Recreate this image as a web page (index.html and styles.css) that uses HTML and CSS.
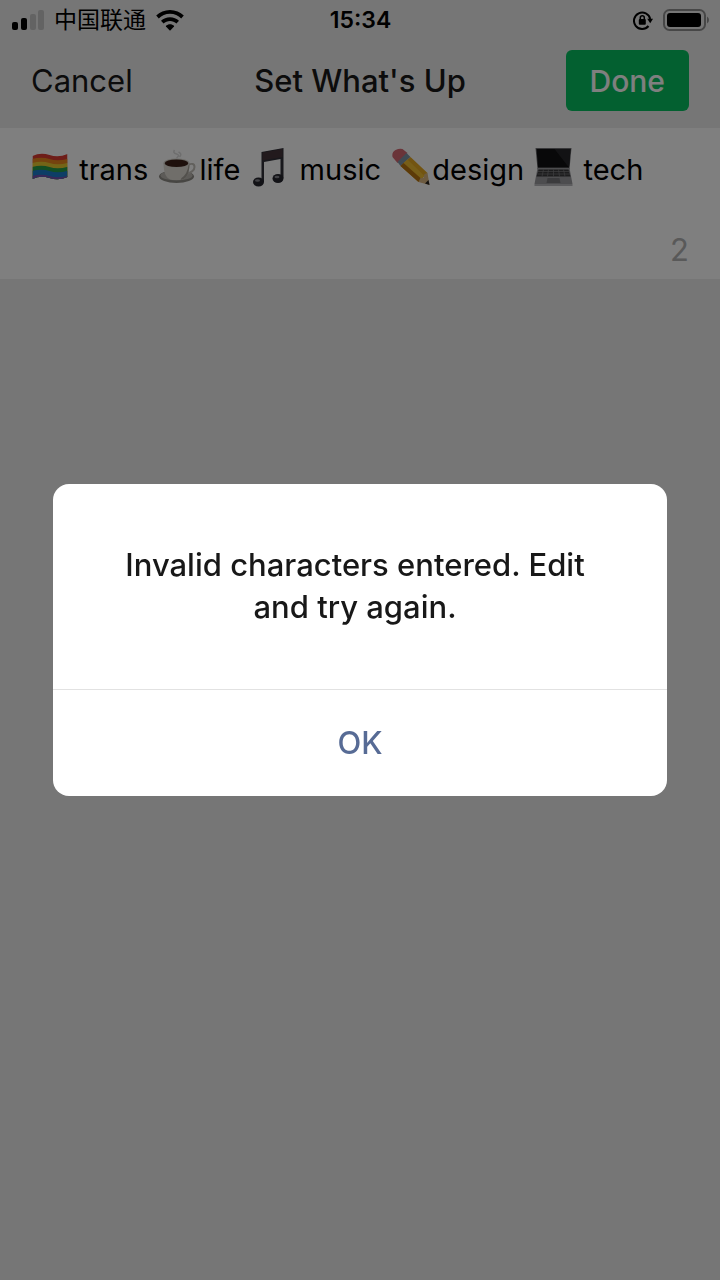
FILE: index.html
```
<!DOCTYPE html>
<html lang="en">
<head>
<meta charset="utf-8">
<meta name="viewport" content="width=device-width, initial-scale=1">
<title>Set What's Up</title>
<link rel="stylesheet" href="styles.css">
</head>
<body>
<div class="screen">
  <header class="top">
    <div class="status">
      <div class="status-left">
        <svg class="signal" viewBox="0 0 32 20" aria-hidden="true">
          <rect x="0" y="12" width="6" height="8" rx="2"/>
          <rect x="9" y="8" width="6" height="12" rx="2"/>
          <rect class="weak" x="18" y="4" width="6" height="16" rx="2"/>
          <rect class="weak" x="26" y="0" width="6" height="20" rx="2"/>
        </svg>
        <span class="carrier">中国联通</span>
        <svg class="wifi" viewBox="0 0 28 21" aria-hidden="true">
          <path d="M14 0C8.600 0 3.700 2.100 0.200 5.600L2.800 8.400C5.700 5.500 9.600 3.800 14 3.800S22.300 5.500 25.200 8.400L27.800 5.600C24.300 2.100 19.400 0 14 0Z"/>
          <path d="M14 7.200C10.600 7.200 7.400 8.500 5 10.800L7.600 13.500C9.300 11.900 11.500 11 14 11S18.700 11.900 20.400 13.500L23 10.800C20.600 8.500 17.400 7.200 14 7.200Z"/>
          <path d="M14 14.200C12.500 14.200 11 14.800 10 15.800Q9.800 16.100 10 16.400L13.500 20.200Q14 20.700 14.500 20.200L18 16.400Q18.200 16.100 18 15.800C17 14.800 15.500 14.200 14 14.200Z"/>
        </svg>
      </div>
      <time class="clock">15:34</time>
      <div class="status-right">
        <svg class="lock" viewBox="0 0 20 19" aria-hidden="true">
          <path class="ring" d="M15.500 15A8.200 8.200 0 1 1 17.200 8"/>
          <path d="M14.200 7.800H20L17.200 12.200Z"/>
          <rect x="5.800" y="8" width="7" height="5.800" rx="1"/>
          <path class="shackle" d="M7.300 8.500V6.700a2 2 0 0 1 4 0V8.500"/>
        </svg>
        <svg class="battery" viewBox="0 0 46 22" aria-hidden="true">
          <rect class="case" x="1" y="1" width="41" height="20" rx="5.500"/>
          <rect x="4" y="4" width="34" height="14" rx="3"/>
          <path class="cap" d="M44 7.500Q46 8.500 46 11T44 14.500Z"/>
        </svg>
      </div>
    </div>
    <nav class="nav">
      <div class="nav-side"><button class="cancel" type="button">Cancel</button></div>
      <h1 class="title">Set What's Up</h1>
      <div class="nav-side end"><button class="done" type="button">Done</button></div>
    </nav>
  </header>
  <main class="field">
    <div class="entry" role="textbox" contenteditable="true" spellcheck="false" aria-label="What's Up"><svg class="emoji" viewBox="0 0 42 42" role="img" aria-label="Rainbow flag">
      <defs><clipPath id="flag"><path d="M4 9Q12 5 21 8T39 7V30Q30 34 21 31T4 32Z"/></clipPath></defs>
      <g clip-path="url(#flag)">
        <path fill="#dd3a30" d="M0 4H42V16H0Z"/>
        <path fill="#e8871e" d="M0 13Q12 9 21 12T42 11V42H0Z"/>
        <path fill="#e6c82e" d="M0 17Q12 13 21 16T42 15V42H0Z"/>
        <path fill="#249c49" d="M0 21Q12 17 21 20T42 19V42H0Z"/>
        <path fill="#1a7ccc" d="M0 25Q12 21 21 24T42 23V42H0Z"/>
        <path fill="#7350b0" d="M0 30Q12 26 21 29T42 28V42H0Z"/>
      </g>
    </svg> trans <svg class="emoji" viewBox="0 0 42 42" role="img" aria-label="Coffee">
      <ellipse cx="20" cy="29.500" rx="17.500" ry="6.500" fill="#8f8c86"/>
      <ellipse cx="20" cy="28.500" rx="16" ry="5" fill="#bab7b0"/>
      <path d="M31 18Q38 15 38 20T29 27" fill="none" stroke="#c4c1ba" stroke-width="2"/>
      <path d="M7 16Q7 32 16 33H24Q33 32 33 16Z" fill="#e0ddd5"/>
      <path d="M25 31Q31 27 32 18L33 16Q33 32 24 33Z" fill="#a7a39a"/>
      <ellipse cx="20" cy="16" rx="13" ry="4.500" fill="#d8d5ce"/>
      <ellipse cx="20" cy="16.300" rx="11.800" ry="3.800" fill="#3c2118"/>
      <path d="M20 11Q24 8 20 7T18 3M23 10Q26 7 22 5" fill="none" stroke="#c5c5c5" stroke-width="1.500" opacity=".6"/>
    </svg>life <svg class="emoji" viewBox="0 0 42 42" role="img" aria-label="Musical notes">
      <path d="M13 5L35 1V31H32V12L15.500 15V35H13Z" fill="#303038"/>
      <path d="M14 5.500L34 2V10L14 13.500Z" fill="#44343a"/>
      <ellipse cx="10" cy="35" rx="5.500" ry="4.500" fill="#24242c"/>
      <ellipse cx="29.500" cy="31.500" rx="5.500" ry="4.500" fill="#24242c"/>
      <ellipse cx="9" cy="33.500" rx="2.500" ry="1.300" fill="#85858d"/>
      <ellipse cx="28.500" cy="30" rx="2.500" ry="1.300" fill="#85858d"/>
    </svg> music <svg class="emoji" viewBox="0 0 42 42" role="img" aria-label="Pencil">
      <path d="M3 10Q2 5 6 3T13 2L18 6L8 16Z" fill="#d56873"/>
      <path d="M8 15L17 6L21 10L11 19Z" fill="#7e94a6"/>
      <path d="M11 19L21 10L38 26L29 35Z" fill="#e5a822"/>
      <path d="M14 16L18 12.500L35 29L32 32Z" fill="#eebc30"/>
      <path d="M11 19L14 16L32 32L29 35Z" fill="#b87410"/>
      <path d="M29 35L31 31L34 31L35 27L38 26L40 38Z" fill="#dab681"/>
      <path d="M35.500 36.500L39 33L40 38Z" fill="#292522"/>
    </svg>design <svg class="emoji" viewBox="0 0 42 42" role="img" aria-label="Laptop">
      <path d="M3 1H39L37 22H5Z" fill="#707074"/>
      <path d="M4 2H38L36.500 20.500H5.500Z" fill="#101012"/>
      <path d="M22 2H38L36.500 20.500Z" fill="#252528"/>
      <path d="M5 21H37L40 37H2Z" fill="#9a9a9e"/>
      <path d="M6 22.500H36L38 29.500H4Z" fill="#3a3a3d"/>
      <path d="M5.500 24.500H37M5 27H37.500M11 22.500L9.500 29.500M16 22.500L15 29.500M21 22.500V29.500M26 22.500L27 29.500M31 22.500L32.500 29.500" stroke="#7c7c80" stroke-width=".7"/>
      <path d="M15 31H27L28 36H14Z" fill="#77777a"/>
      <path d="M2 37H40V39H2Z" fill="#b8b8bc"/>
    </svg> tech</div>
    <p class="count">2</p>
  </main>
</div>
<div class="overlay">
  <section class="dialog" role="alertdialog" aria-modal="true" aria-labelledby="message">
    <p class="message" id="message">Invalid characters entered. Edit and try again.</p>
    <button class="ok" type="button">OK</button>
  </section>
</div>
</body>
</html>
```
FILE: styles.css
```
* {
  box-sizing: border-box;
}

body {
  margin: 0;
  background: #ededed;
  color: #181818;
  font-family: Inter, "Noto Sans CJK SC", sans-serif;
  font-size: 31px;
  line-height: 42px;
}

button {
  border: 0;
  background: none;
  color: inherit;
  font: inherit;
}

.screen {
  min-height: 100vh;
}

.status {
  display: grid;
  grid-template-columns: 1fr auto 1fr;
  align-items: center;
  height: 40px;
  padding: 0 11px 0 12px;
  color: #000;
}

.status-left,
.status-right {
  display: flex;
  align-items: center;
}

.status-left {
  gap: 10px;
}

.status-right {
  justify-content: flex-end;
  gap: 10px;
}

.signal {
  width: 32px;
  height: 20px;
}

.weak {
  opacity: 0.16;
}

.carrier {
  padding-bottom: 4px;
  font-family: "Noto Sans CJK SC", sans-serif;
  font-size: 23px;
  line-height: 36px;
}

.wifi {
  width: 28px;
  height: 21px;
}

.clock {
  font-size: 23px;
  font-weight: 600;
  line-height: 40px;
}

.lock {
  width: 20px;
  height: 19px;
}

.ring,
.shackle {
  fill: none;
  stroke: #000;
  stroke-width: 2;
}

.shackle {
  stroke-width: 1.5;
}

.battery {
  width: 46px;
  height: 22px;
}

.case {
  fill: none;
  stroke: #000;
  stroke-width: 2;
  opacity: 0.4;
}

.cap {
  opacity: 0.4;
}

.nav {
  display: grid;
  grid-template-columns: 1fr auto 1fr;
  align-items: center;
  height: 88px;
  padding: 0 31px 7px;
}

.nav-side {
  display: flex;
}

.end {
  justify-content: flex-end;
}

.cancel {
  padding: 0;
}

.title {
  margin: 0;
  font-size: 31px;
  font-weight: 500;
}

.done {
  height: 61px;
  padding: 0 24px;
  border-radius: 6px;
  background: #07c160;
  color: #fff;
  font-size: 30px;
  font-weight: 500;
}

.field {
  padding: 19px 31px 8px 28px;
  background: #fff;
}

.entry {
  min-height: 82px;
  color: #000;
  font-size: 29px;
  outline: 0;
}

.emoji {
  width: 43px;
  height: 42px;
  vertical-align: -9px;
}

.count {
  margin: 0;
  color: #b2b2b2;
  text-align: right;
}

.overlay {
  position: fixed;
  inset: 0;
  display: flex;
  align-items: center;
  justify-content: center;
  padding: 0 53px;
  background: rgba(0, 0, 0, 0.5);
}

.dialog {
  width: 100%;
  max-width: 640px;
  overflow: hidden;
  border-radius: 16px;
  background: #fff;
}

.message {
  margin: 0;
  padding: 60px 58px 61px 48px;
  font-weight: 500;
  text-align: center;
}

.ok {
  display: block;
  width: 100%;
  height: 107px;
  border-top: 1px solid #e2e2e2;
  color: #576b95;
  font-weight: 500;
}
```
